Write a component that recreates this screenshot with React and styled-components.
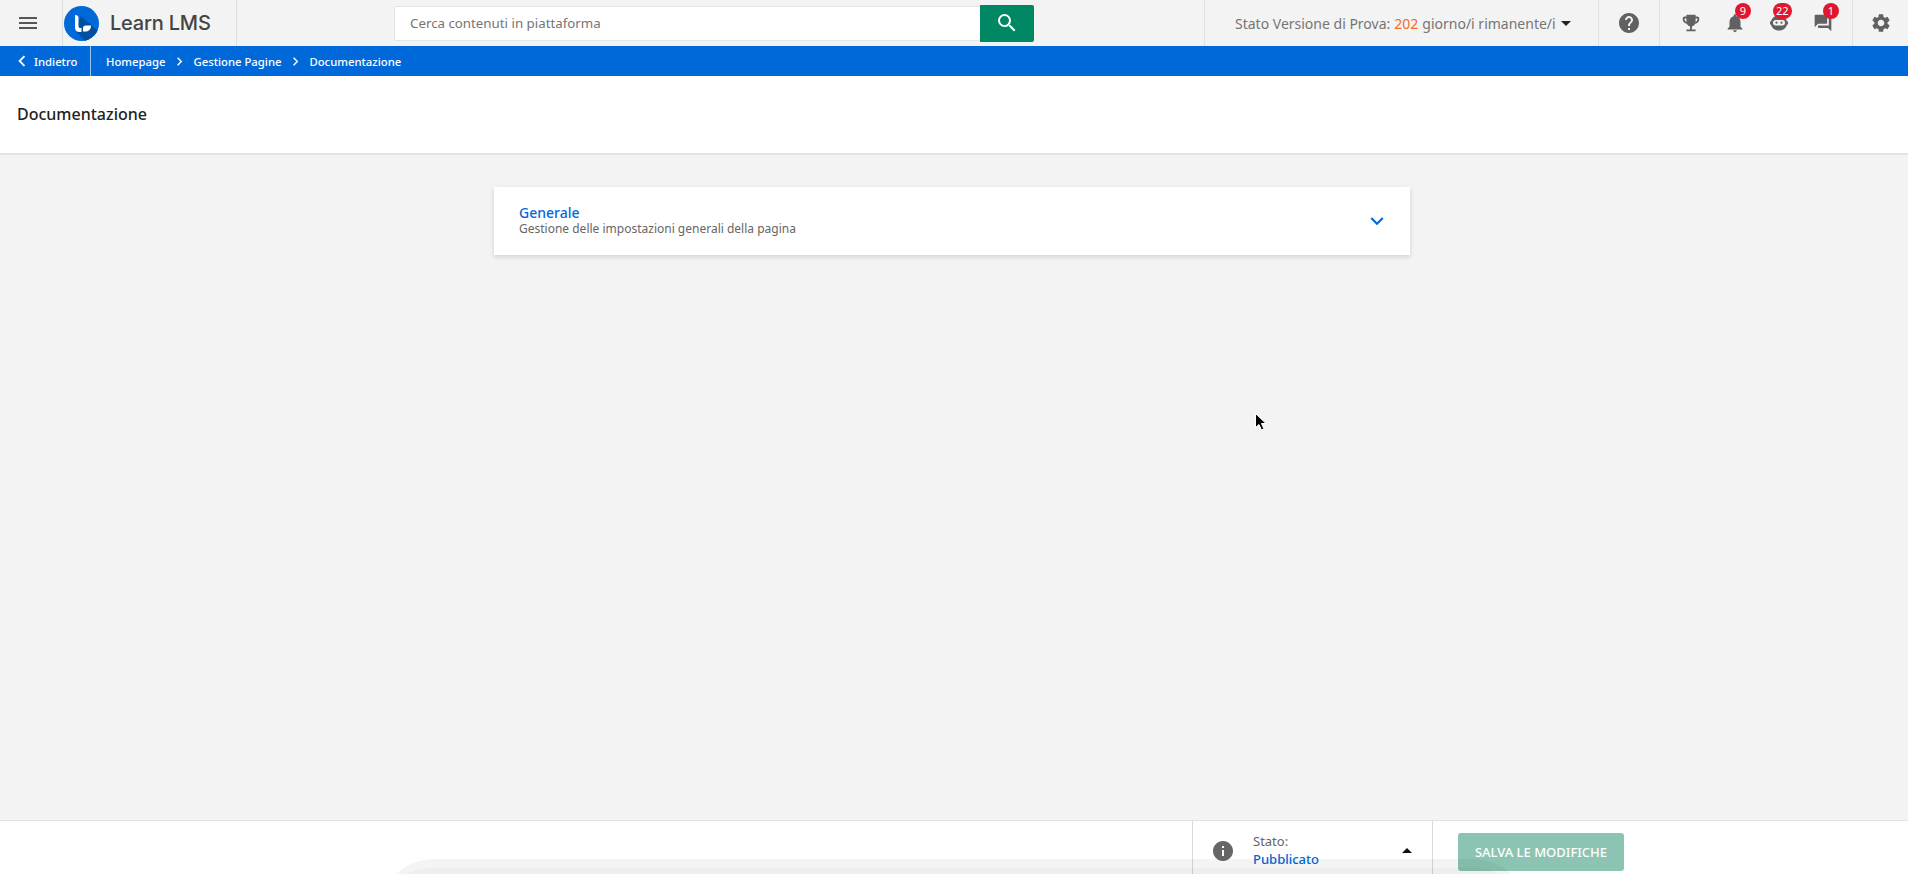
import React from "react";
import styled, { createGlobalStyle } from "styled-components";
import {
  MdMenu,
  MdSearch,
  MdHelp,
  MdEmojiEvents,
  MdNotifications,
  MdForum,
  MdSettings,
  MdInfo,
  MdExpandMore,
  MdChevronLeft,
  MdChevronRight,
  MdArrowDropDown,
  MdArrowDropUp,
} from "react-icons/md";

const GlobalStyle = createGlobalStyle`
  html, body {
    margin: 0;
    padding: 0;
    height: 100%;
    overflow: hidden;
    background: #f3f3f3;
    font-family: "Noto Sans", "Open Sans", sans-serif;
  }
  * { box-sizing: border-box; }
`;

const Page = styled.div`
  position: relative;
  display: flex;
  flex-direction: column;
  height: 100vh;
  overflow: hidden;
`;

const Header = styled.header`
  display: flex;
  align-items: stretch;
  height: 46px;
  background: #f3f3f3;
`;
const MenuButton = styled.div`
  width: 62px;
  flex: none;
  display: flex;
  align-items: center;
  justify-content: center;
  padding-right: 6px;
  color: #555;
  font-size: 24px;
`;
const LogoBox = styled.div`
  width: 175px;
  flex: none;
  display: flex;
  align-items: center;
  gap: 11px;
  padding-left: 1px;
  border-left: 1px solid #dedede;
  border-right: 1px solid #dedede;
`;
const LogoText = styled.span`
  font-family: Inter, sans-serif;
  font-size: 20px;
  font-weight: 500;
  color: #444;
  letter-spacing: -0.2px;
`;
const SearchForm = styled.div`
  display: flex;
  align-items: center;
  width: 640px;
  margin-left: 157px;
  flex: none;
`;
const SearchInput = styled.div`
  flex: 1;
  height: 35px;
  display: flex;
  align-items: center;
  padding-left: 15px;
  background: #fff;
  border: 1px solid #e4e4e4;
  border-right: 0;
  border-radius: 2px 0 0 2px;
  font-size: 13.3px;
  color: #757575;
`;
const SearchButton = styled.div`
  width: 54px;
  height: 37px;
  display: flex;
  align-items: center;
  justify-content: center;
  background: #008763;
  border-radius: 0 2px 2px 0;
  color: #fff;
  font-size: 24px;
`;
const TrialBox = styled.div`
  width: 394px;
  margin-left: 170px;
  flex: none;
  display: flex;
  align-items: center;
  padding-left: 30px;
  border-left: 1px solid #e2e2e2;
  font-size: 14px;
  color: #757575;
  white-space: nowrap;
`;
const Days = styled.span`
  color: #f26a2e;
  margin: 0 4px;
`;
const Caret = styled.span`
  display: flex;
  color: #222;
  font-size: 24px;
  margin-left: -2px;
`;
const IconCell = styled.div`
  width: ${(p) => p.$width}px;
  flex: none;
  display: flex;
  align-items: center;
  justify-content: ${(p) => p.$justify || "center"};
  padding-left: ${(p) => p.$pad || 0}px;
  gap: ${(p) => p.$gap || 0}px;
  border-left: 1px solid #e2e2e2;
  color: #616161;
`;
const IconSlot = styled.div`
  position: relative;
  width: ${(p) => p.$width || 24}px;
  height: 24px;
  flex: none;
  display: flex;
  align-items: center;
  justify-content: center;
  font-size: ${(p) => p.$size || 22}px;
`;
const Badge = styled.span`
  position: absolute;
  top: -8px;
  left: ${(p) => p.$left}px;
  min-width: 16px;
  height: 16px;
  padding: 0 3px;
  border-radius: 8px;
  background: #e0182d;
  color: #fff;
  font-size: 11px;
  line-height: 16px;
  text-align: center;
`;

const Crumbs = styled.nav`
  display: flex;
  align-items: center;
  height: 30px;
  background: #0069d9;
  color: #fff;
  font-size: 11.3px;
  font-weight: 500;
`;
const BackLink = styled.div`
  width: 91px;
  height: 100%;
  flex: none;
  display: flex;
  align-items: center;
  padding-left: 11px;
  gap: 1px;
  border-right: 1px solid rgba(255, 255, 255, 0.6);
`;
const CrumbList = styled.div`
  display: flex;
  align-items: center;
  padding-left: 15px;
`;
const CrumbArrow = styled.span`
  display: flex;
  font-size: 17px;
  margin: 0 5.5px;
`;
const BackArrow = styled.span`
  display: flex;
  font-size: 22px;
`;

const TitleBand = styled.div`
  height: 79px;
  flex: none;
  display: flex;
  align-items: center;
  padding: 0 17px 1px;
  background: #fff;
  border-bottom: 2px solid #e4e4e4;
  font-size: 16px;
  font-weight: 500;
  color: #222;
`;

const Main = styled.main`
  flex: 1;
  display: flex;
  flex-direction: column;
  align-items: center;
  padding: 32px 0 0;
  margin-left: -4px;
`;
const Card = styled.section`
  width: 916px;
  height: 68px;
  display: flex;
  align-items: center;
  justify-content: space-between;
  padding: 0 20px 0 25px;
  background: #fff;
  box-shadow: 0 2px 5px rgba(0, 0, 0, 0.14);
`;
const CardTitle = styled.div`
  font-size: 14px;
  line-height: 16px;
  font-weight: 500;
  color: #0069d9;
`;
const CardSub = styled.div`
  font-size: 12px;
  line-height: 16px;
  color: #666;
`;
const CardArrow = styled.span`
  display: flex;
  font-size: 26px;
  color: #0069d9;
`;

const Footer = styled.footer`
  height: 54px;
  flex: none;
  display: flex;
  justify-content: flex-end;
  padding-right: 284px;
  background: #fff;
  border-top: 1px solid #e2e2e2;
`;
const StatusBox = styled.div`
  width: 241px;
  display: flex;
  align-items: center;
  padding: 0 0 0 18px;
  border-left: 1px solid #d9d9d9;
  border-right: 1px solid #d9d9d9;
`;
const InfoIcon = styled.span`
  display: flex;
  font-size: 24px;
  color: #666;
  margin-top: 7px;
`;
const StatusText = styled.div`
  margin-left: 18px;
  flex: 1;
  font-size: 13px;
  line-height: 18px;
  padding-top: 5px;
  color: #666;
`;
const StatusValue = styled.div`
  color: #0069d9;
  font-weight: 500;
`;
const StatusCaret = styled.span`
  display: flex;
  font-size: 24px;
  color: #111;
  margin: 6px 13px 0 0;
`;
const SaveArea = styled.div`
  padding: 12px 0 0 25px;
`;
const SaveButton = styled.div`
  width: 166px;
  height: 38px;
  display: flex;
  align-items: center;
  justify-content: center;
  background: #8bc4b2;
  border-radius: 3px;
  color: #fff;
  font-size: 13px;
  font-weight: 500;
`;

const ShadeOuter = styled.div`
  position: absolute;
  left: 375px;
  width: 1157px;
  top: 859px;
  height: 120px;
  padding-top: 9px;
  border-radius: 60px 60px 0 0;
  background: rgba(0, 0, 0, 0.045);
  pointer-events: none;
`;
const ShadeInner = styled.div`
  height: 100%;
  margin: 0 6px;
  border-radius: 50px 50px 0 0;
  background: rgba(0, 0, 0, 0.025);
`;
const Cursor = styled.svg`
  position: absolute;
  left: 1254px;
  top: 412px;
`;

function Logo() {
  return (
    <svg width="35" height="35" viewBox="0 0 35 35">
      <defs>
        <clipPath id="logoClip">
          <circle cx="17.5" cy="17.5" r="17.5" />
        </clipPath>
      </defs>
      <circle cx="17.5" cy="17.5" r="17.5" fill="#0069d9" />
      <path d="M11 24L17 10L40 30L25 40Z" fill="#00509f" clipPath="url(#logoClip)" />
      <path d="M11 9c2.5 0 3.5 1 3.5 3v8c0 1.500 .7 2 2 2h1v4h-2c-3 0-4.500-1.500-4.500-4.500Z" fill="#fff" />
      <path d="M19 22c0-1.500 1-2.500 2.500-2.500H27c0 3.500-2 6-5.500 6H19Z" fill="#fff" />
    </svg>
  );
}

function BotIcon() {
  return (
    <svg width="24" height="24" viewBox="0 0 24 24" fill="currentColor">
      <path d="M12 4.500c-4.300 0-7.500 2.700-7.900 6H3v3h1.100c.4 3.300 3.600 6 7.900 6s7.500-2.700 7.900-6H21v-3h-1.100c-.4-3.300-3.600-6-7.900-6Z" />
      <rect x="6" y="9" width="12" height="5.500" rx="2.700" fill="#f3f3f3" />
      <circle cx="9.500" cy="11.700" r="1.100" />
      <circle cx="14.500" cy="11.700" r="1.100" />
    </svg>
  );
}

export default function App() {
  return (
    <>
      <GlobalStyle />
      <Page>
        <Header>
          <MenuButton>
            <MdMenu />
          </MenuButton>
          <LogoBox>
            <Logo />
            <LogoText>Learn LMS</LogoText>
          </LogoBox>
          <SearchForm>
            <SearchInput>Cerca contenuti in piattaforma</SearchInput>
            <SearchButton>
              <MdSearch />
            </SearchButton>
          </SearchForm>
          <TrialBox>
            Stato Versione di Prova:<Days>202</Days>giorno/i rimanente/i
            <Caret>
              <MdArrowDropDown />
            </Caret>
          </TrialBox>
          <IconCell $width={61}>
            <IconSlot $size={24}>
              <MdHelp />
            </IconSlot>
          </IconCell>
          <IconCell $width={193} $justify="flex-start" $pad={19} $gap={20}>
            <IconSlot>
              <MdEmojiEvents />
            </IconSlot>
            <IconSlot>
              <MdNotifications />
              <Badge $left={12}>9</Badge>
            </IconSlot>
            <IconSlot>
              <BotIcon />
              <Badge $left={6}>22</Badge>
            </IconSlot>
            <IconSlot $size={20}>
              <MdForum />
              <Badge $left={12}>1</Badge>
            </IconSlot>
          </IconCell>
          <IconCell $width={56}>
            <IconSlot>
              <MdSettings />
            </IconSlot>
          </IconCell>
        </Header>
        <Crumbs>
          <BackLink>
            <BackArrow>
              <MdChevronLeft />
            </BackArrow>
            Indietro
          </BackLink>
          <CrumbList>
            Homepage
            <CrumbArrow>
              <MdChevronRight />
            </CrumbArrow>
            Gestione Pagine
            <CrumbArrow>
              <MdChevronRight />
            </CrumbArrow>
            Documentazione
          </CrumbList>
        </Crumbs>
        <TitleBand>Documentazione</TitleBand>
        <Main>
          <Card>
            <div>
              <CardTitle>Generale</CardTitle>
              <CardSub>Gestione delle impostazioni generali della pagina</CardSub>
            </div>
            <CardArrow>
              <MdExpandMore />
            </CardArrow>
          </Card>
        </Main>
        <Footer>
          <StatusBox>
            <InfoIcon>
              <MdInfo />
            </InfoIcon>
            <StatusText>
              Stato:
              <StatusValue>Pubblicato</StatusValue>
            </StatusText>
            <StatusCaret>
              <MdArrowDropUp />
            </StatusCaret>
          </StatusBox>
          <SaveArea>
            <SaveButton>SALVA LE MODIFICHE</SaveButton>
          </SaveArea>
        </Footer>
        <ShadeOuter>
          <ShadeInner />
        </ShadeOuter>
        <Cursor width="14" height="20" viewBox="0 0 14 20">
          <path d="M1.500 1.500V15.500L5 12.500L7.500 18L10 17L7.500 11.500H12Z" fill="#000" stroke="#fff" strokeWidth="1" />
        </Cursor>
      </Page>
    </>
  );
}
